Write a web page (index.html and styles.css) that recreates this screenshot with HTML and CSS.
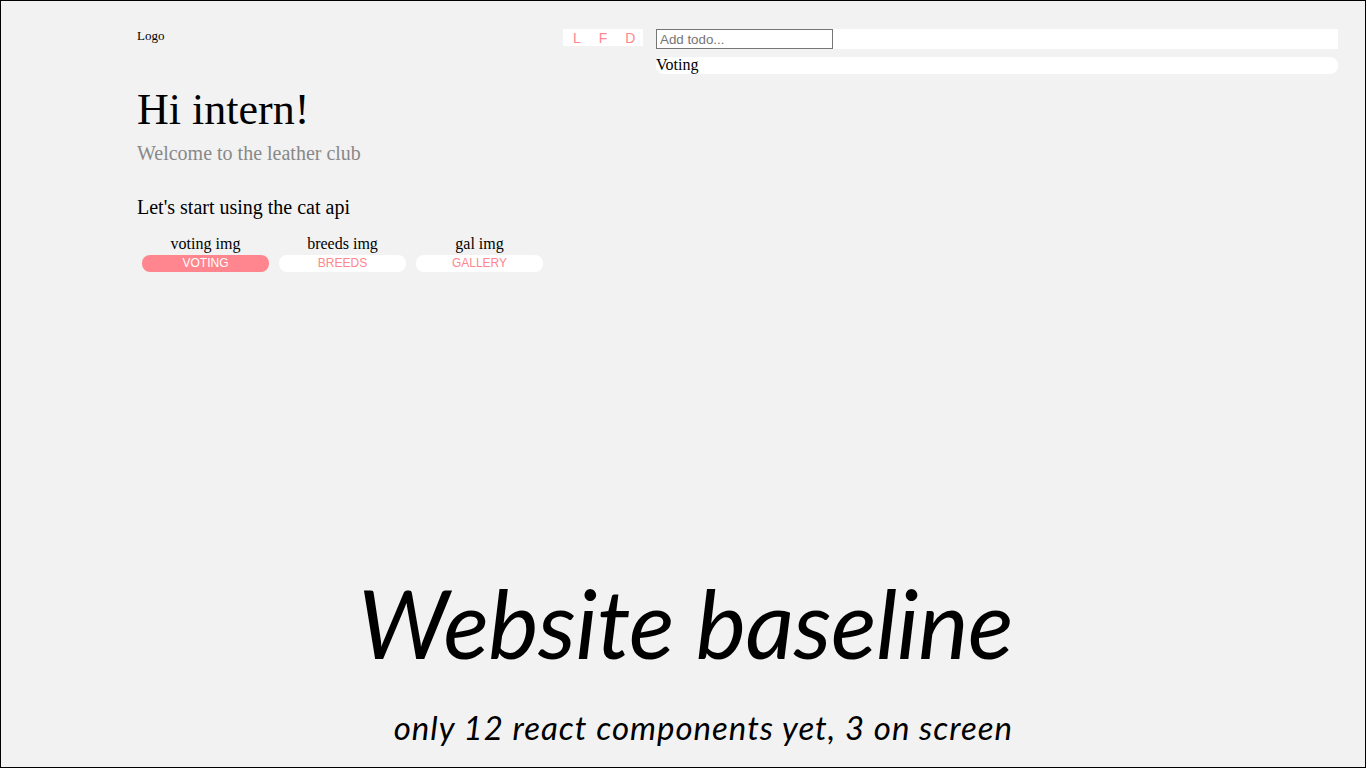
FILE: index.html
```html
<!DOCTYPE html>
<html lang="en">
<head>
  <meta charset="UTF-8">
  <meta name="viewport" content="width=device-width, initial-scale=1.0">
  <title>Website baseline</title>
  <link rel="stylesheet" href="styles.css">
</head>
<body>
  <div class="slide">
    <div class="site">
      <div class="main">
        <div class="logo">Logo</div>
        <h1>Hi intern!</h1>
        <p class="subtitle">Welcome to the leather club</p>
        <p class="intro">Let's start using the cat api</p>

        <div class="cards">
          <div class="card">
            <div class="card-label">voting img</div>
            <a href="#" class="pill active">Voting</a>
          </div>
          <div class="card">
            <div class="card-label">breeds img</div>
            <a href="#" class="pill">Breeds</a>
          </div>
          <div class="card">
            <div class="card-label">gal img</div>
            <a href="#" class="pill">Gallery</a>
          </div>
        </div>
      </div>

      <div class="aside">
        <div class="nav">
          <span>L</span>
          <span>F</span>
          <span>D</span>
        </div>
        <div class="todo">
          <input type="text" class="todo-input" placeholder="Add todo...">
        </div>
        <div class="todo-item">Voting</div>
      </div>
    </div>

    <div class="caption">
      <div class="caption-title">Website baseline</div>
      <div class="caption-sub">only 12 react components yet, 3 on screen</div>
    </div>
  </div>
</body>
</html>
```

FILE: styles.css
```css
body {
  margin: 0;
  padding: 0;
  font-family: "Liberation Serif", "Times New Roman", serif;
  color: #000;
}
.slide {
  width: 1366px;
  height: 768px;
  box-sizing: border-box;
  border: 1px solid #000;
  background-color: #f2f2f2;
  display: flex;
  flex-direction: column;
  overflow: hidden;
}
.site {
  display: flex;
  padding: 27px 0 0 136px;
}
.main {
  width: 426px;
}
.logo {
  font-size: 13px;
  line-height: 15px;
}
h1 {
  font-size: 44px;
  font-weight: normal;
  line-height: 50px;
  margin: 42px 0 0;
}
.subtitle {
  font-size: 20px;
  line-height: 23px;
  color: #888;
  margin: 7px 0 0;
}
.intro {
  font-size: 20px;
  line-height: 23px;
  margin: 31px 0 0;
}
.cards {
  display: flex;
  gap: 10px;
  margin: 16px 0 0 5px;
}
.card {
  width: 127px;
  text-align: center;
}
.card-label {
  font-size: 16px;
  line-height: 18px;
  margin-bottom: 2px;
}
.pill {
  display: block;
  height: 17px;
  line-height: 17px;
  border-radius: 8px;
  background-color: #fff;
  color: #ff868e;
  font-family: "Liberation Sans", Arial, sans-serif;
  font-size: 12px;
  text-transform: uppercase;
  text-decoration: none;
}
.pill.active {
  background-color: #ff868e;
  color: #fff;
}
.aside {
  width: 775px;
  display: grid;
  grid-template-columns: 80px 1fr;
  column-gap: 13px;
  row-gap: 8px;
  align-content: start;
  padding-top: 1px;
}
.nav {
  height: 17px;
  background-color: #fff;
  display: flex;
  align-items: center;
  gap: 18px;
  padding-left: 10px;
  font-family: "Liberation Sans", Arial, sans-serif;
  font-size: 14px;
  color: #ff868e;
}
.todo {
  height: 20px;
  background-color: #fff;
}
.todo-input {
  display: block;
  width: 177px;
  height: 20px;
  box-sizing: border-box;
  margin: 0;
  padding: 1px 3px;
  border: 1px solid #767676;
  font-family: "Liberation Sans", Arial, sans-serif;
  font-size: 13.33px;
}
.todo-input::placeholder {
  color: #757575;
}
.todo-item {
  grid-column: 2;
  height: 17px;
  line-height: 16px;
  background-color: #fff;
  border-radius: 8px;
  font-size: 16px;
}
.caption {
  margin-top: auto;
  display: flex;
  flex-direction: column;
  align-items: flex-end;
  padding: 0 352px 22px 0;
  font-family: Lato, "Open Sans", sans-serif;
  font-style: italic;
}
.caption-title {
  font-size: 95px;
  line-height: 100px;
  letter-spacing: -0.5px;
}
.caption-sub {
  font-size: 33px;
  line-height: 36px;
  letter-spacing: 1px;
  margin-top: 37px;
}
```
